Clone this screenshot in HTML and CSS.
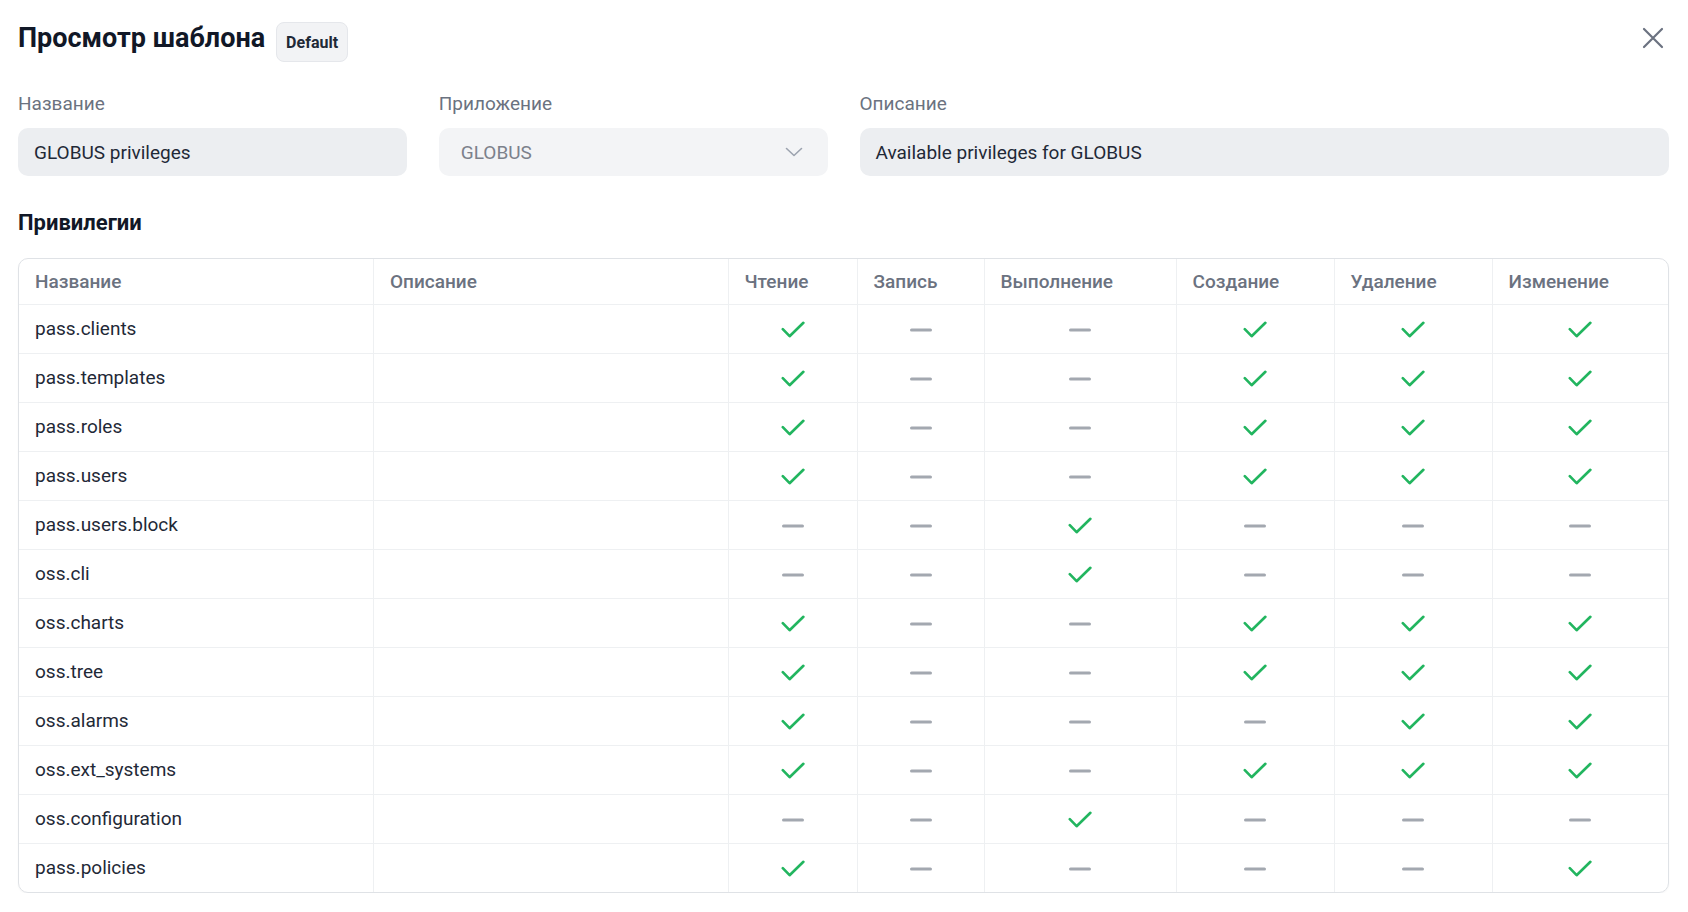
FILE: index.html
```html
<!DOCTYPE html>
<html lang="ru">
<head>
<meta charset="utf-8">
<title>Просмотр шаблона</title>
<link rel="stylesheet" href="styles.css">
</head>
<body>
<svg class="defs" width="0" height="0" aria-hidden="true">
  <symbol id="chk" viewBox="0 0 24 18"><path d="M1.8 8.2 L8.6 15.2 L22.4 1.8" fill="none" stroke="currentColor" stroke-width="2.6" stroke-linecap="round" stroke-linejoin="round"/></symbol>
  <symbol id="dash" viewBox="0 0 22 4"><path d="M1.5 2 H20.5" fill="none" stroke="currentColor" stroke-width="3" stroke-linecap="round"/></symbol>
</svg>
<div class="page">
  <header class="head">
    <div class="title-wrap">
      <h1 class="title">Просмотр шаблона</h1>
      <span class="badge">Default</span>
    </div>
    <button class="close" aria-label="Закрыть">
      <svg width="22" height="22" viewBox="0 0 22 22"><path d="M2 2 L20 20 M20 2 L2 20" stroke="currentColor" stroke-width="2.2" stroke-linecap="round"/></svg>
    </button>
  </header>

  <div class="fields">
    <div class="field">
      <div class="label">Название</div>
      <div class="input">GLOBUS privileges</div>
    </div>
    <div class="field">
      <div class="label">Приложение</div>
      <div class="input select"><span>GLOBUS</span>
        <svg width="18" height="10" viewBox="0 0 18 10"><path d="M1.5 1.5 L9 8.5 L16.5 1.5" fill="none" stroke="currentColor" stroke-width="1.6" stroke-linecap="round" stroke-linejoin="round"/></svg>
      </div>
    </div>
    <div class="field wide">
      <div class="label">Описание</div>
      <div class="input">Available privileges for GLOBUS</div>
    </div>
  </div>

  <h2 class="section">Привилегии</h2>

  <div class="table-wrap">
    <table class="grid">
      <colgroup>
        <col class="c-name"><col class="c-desc"><col class="c-read"><col class="c-write"><col class="c-exec"><col class="c-create"><col class="c-del"><col class="c-edit">
      </colgroup>
      <thead>
        <tr><th>Название</th><th>Описание</th><th>Чтение</th><th>Запись</th><th>Выполнение</th><th>Создание</th><th>Удаление</th><th>Изменение</th></tr>
      </thead>
      <tbody id="rows"></tbody>
    </table>
  </div>
</div>
<script src="app.js"></script>
</body>
</html>
```

FILE: app.js
```js
const data = [
  ["pass.clients", "100111"],
  ["pass.templates", "100111"],
  ["pass.roles", "100111"],
  ["pass.users", "100111"],
  ["pass.users.block", "001000"],
  ["oss.cli", "001000"],
  ["oss.charts", "100111"],
  ["oss.tree", "100111"],
  ["oss.alarms", "100011"],
  ["oss.ext_systems", "100111"],
  ["oss.configuration", "001000"],
  ["pass.policies", "100001"]
];
const tb = document.getElementById("rows");
const chk = '<svg class="ic chk" width="24" height="18"><use href="#chk"/></svg>';
const dash = '<svg class="ic dash" width="22" height="4"><use href="#dash"/></svg>';
tb.innerHTML = data.map(([n, f]) =>
  "<tr><td>" + n + "</td><td></td>" +
  f.split("").map(c => '<td class="mk">' + (c === "1" ? chk : dash) + "</td>").join("") +
  "</tr>").join("");
```

FILE: styles.css
```css
* { box-sizing: border-box; }
html, body { margin: 0; background: #ffffff; }
body {
  font-family: Roboto, "Noto Sans", "Liberation Sans", sans-serif;
  color: #1f2937;
  font-size: 19px;
}
.defs { position: absolute; width: 0; height: 0; overflow: hidden; }

.page { padding: 22px 19px 0 18px; }

.head {
  display: flex;
  justify-content: space-between;
  align-items: flex-start;
  height: 40px;
}
.title-wrap {
  display: flex;
  align-items: flex-start;
  gap: 11px;
}
.title {
  margin: 0;
  font-size: 27px;
  font-weight: 700;
  color: #111827;
  line-height: 32px;
}
.badge {
  display: inline-flex;
  align-items: center;
  height: 40px;
  padding: 0 9px;
  border-radius: 8px;
  background: #f2f3f5;
  border: 1px solid #e5e7eb;
  font-size: 16px;
  font-weight: 700;
  color: #1f2937;
}
.close {
  border: 0;
  background: none;
  padding: 0;
  margin: 5px 5px 0 0;
  color: #6b7280;
  width: 22px;
  height: 22px;
  display: flex;
}

.fields {
  margin-top: 30px;
  display: grid;
  grid-template-columns: repeat(4, 1fr);
  gap: 32px;
}
.field.wide { grid-column: span 2; }
.label {
  font-size: 19px;
  line-height: 24px;
  color: #6b7280;
  margin-bottom: 12px;
}
.input {
  height: 48px;
  border-radius: 10px;
  background: #eceef1;
  padding: 0 16px;
  display: flex;
  align-items: center;
  font-size: 19px;
  color: #1f2937;
}
.select {
  background: #f3f4f6;
  color: #7c818b;
  justify-content: space-between;
  padding: 0 25px 0 22px;
}
.select svg { color: #9ca3af; }

.section {
  margin: 33px 0 21px;
  font-size: 22px;
  line-height: 28px;
  font-weight: 700;
  color: #111827;
}

.table-wrap {
  border: 1px solid #dfe2e6;
  border-radius: 10px;
  overflow: hidden;
  box-shadow: 0 1px 2px rgba(0,0,0,0.04);
}
.grid {
  width: 100%;
  border-collapse: collapse;
  table-layout: fixed;
}
.c-read { width: 129px; }
.c-write { width: 127px; }
.c-exec { width: 192px; }
.c-create { width: 158px; }
.c-del { width: 158px; }
.c-edit { width: 176px; }

.grid th, .grid td {
  border-right: 1px solid #eef0f2;
  border-bottom: 1px solid #eef0f2;
  padding: 0 16px;
  text-align: left;
  white-space: nowrap;
}
.grid th:last-child, .grid td:last-child { border-right: 0; }
.grid tbody tr:last-child td { border-bottom: 0; }
.grid th {
  height: 45px;
  font-size: 19px;
  font-weight: 500;
  color: #6b7280;
}
.grid td {
  height: 49px;
  font-size: 19px;
  color: #1f2937;
}
.grid td.mk { text-align: center; padding: 0; }
.ic { display: inline-block; vertical-align: middle; }
.chk { color: #22b55f; }
.dash { color: #a3a8b0; }
```
